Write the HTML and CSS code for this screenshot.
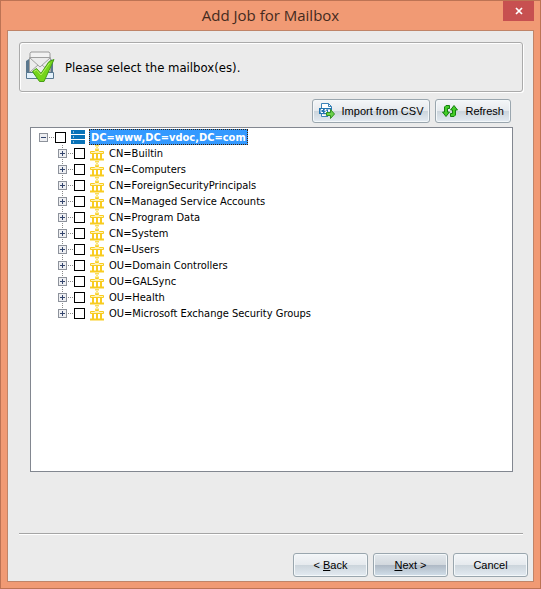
FILE: index.html
```html
<!DOCTYPE html>
<html lang="en">
<head>
    <meta charset="UTF-8">
    <meta name="viewport" content="width=device-width, initial-scale=1.0">
    <title>Add Job for Mailbox</title>
    <link rel="stylesheet" href="styles.css">
</head>
<body>
    <!-- Shared icons -->
    <svg class="icon-defs" aria-hidden="true">
        <symbol id="icon-container" viewBox="0 0 14 16">
            <path d="M5 .5h4M5.500 1l3 3M8.500 1l-3 3M5 4.500h4" stroke="#fadc50" fill="none"/>
            <path d="M.5 8.500V6.500h4l1-1h3l1 1h4v2z" stroke="#f8cc20" fill="#fff3b8"/>
            <path d="M3 9v5M7 9v5M11 9v5" stroke="#f8cc20" stroke-width="2"/>
            <path d="M0 14.500h14" stroke="#f8cc20" stroke-width="2"/>
        </symbol>
    </svg>

    <div class="window">
        <header class="title-bar">
            <h1 class="title">Add Job for Mailbox</h1>
            <button class="close-btn" type="button" aria-label="Close">
                <svg width="8" height="8" viewBox="0 0 8 8"><path d="M1 1l6 6M7 1L1 7" stroke="#fff" stroke-width="1.700"/></svg>
            </button>
        </header>

        <main class="content">
            <div class="banner">
                <svg class="banner-icon" width="30" height="32" viewBox="0 0 30 32" aria-hidden="true">
                    <path d="M1 10l3-2h22l2 2v17H1z" fill="#5b788e"/>
                    <path d="M5 2.500L6 1h18l1 1.500V20H5z" fill="#f2f2f2" stroke="#999"/>
                    <path d="M4.500 6.500h21V22h-21z" fill="#ececec" stroke="#a0a0a0"/>
                    <path d="M5 7l10 9L25 7M5 21l8-7M25 21l-8-7" fill="none" stroke="#a0a0a0"/>
                    <path d="M1.500 21.500h7l2 3h9l2-3h7v6h-27z" fill="#e3f1fc" stroke="#587890"/>
                    <path d="M7.500 20.500l4-3 4.500 5L24 10.500l5-2L19 30.500h-4.500z" fill="#74d41c" stroke="#469e16"/>
                    <path d="M9 20.500l2.500-1.500 4.500 5 8.500-12" fill="none" stroke="#b4f060"/>
                </svg>
                <p class="banner-text">Please select the mailbox(es).</p>
            </div>

            <div class="toolbar">
                <button class="btn tool-btn" type="button">
                    <svg width="16" height="16" viewBox="0 0 16 16" aria-hidden="true">
                        <path d="M2.500 5V.500h7l3 3V6M2.500 11v2.500H9" fill="#fff" stroke="#3b83b8"/>
                        <path d="M9.500.500v3h3" fill="none" stroke="#3b83b8"/>
                        <path d="M0 5h13v6H0z" fill="#2475b0"/>
                        <path d="M4 6.500H2v3h2M7.500 6.500H6V8h1.500v1.500H5.500M9 6l1 3 1-3" fill="none" stroke="#fff"/>
                        <path d="M7.500 9.500h4v-3l4 4.500-4 4.500v-3h-4z" fill="#6bd14b" stroke="#309020"/>
                    </svg>
                    <span>Import from CSV</span>
                </button>
                <button class="btn tool-btn" type="button">
                    <svg width="16" height="14" viewBox="0 0 16 14" aria-hidden="true">
                        <path d="M7.500 1.500H4L2.500 3v5h-2L4 12.500 7.500 8h-2V4.500h2z" fill="#43cc28" stroke="#168010"/>
                        <path d="M8.500 12.500H12l1.500-1.500V6h2L12 1.500 8.500 6h2v3.500h-2z" fill="#43cc28" stroke="#168010"/>
                    </svg>
                    <span>Refresh</span>
                </button>
            </div>

            <div class="tree-box">
                <div class="tree-row">
                    <button class="expander open" type="button" aria-label="Collapse"></button>
                    <span class="branch"></span>
                    <input class="check" type="checkbox" id="root">
                    <svg class="node-icon" width="14" height="16" viewBox="0 0 14 16" aria-hidden="true">
                        <path d="M0 1h14v4H0zM0 6h14v4H0zM0 11h14v4H0z" fill="#0872b8"/>
                        <path d="M2 3h1M2 8h1M2 13h1" stroke="#fff"/>
                    </svg>
                    <label class="node-label selected" for="root">DC=www,DC=vdoc,DC=com</label>
                </div>
                <ul class="tree-children">
                    <li class="tree-row">
                        <button class="expander" type="button" aria-label="Expand"></button>
                        <span class="branch"></span>
                        <input class="check" type="checkbox" id="builtin">
                        <svg class="node-icon" width="14" height="16" aria-hidden="true"><use href="#icon-container"/></svg>
                        <label class="node-label" for="builtin">CN=Builtin</label>
                    </li>
                    <li class="tree-row">
                        <button class="expander" type="button" aria-label="Expand"></button>
                        <span class="branch"></span>
                        <input class="check" type="checkbox" id="computers">
                        <svg class="node-icon" width="14" height="16" aria-hidden="true"><use href="#icon-container"/></svg>
                        <label class="node-label" for="computers">CN=Computers</label>
                    </li>
                    <li class="tree-row">
                        <button class="expander" type="button" aria-label="Expand"></button>
                        <span class="branch"></span>
                        <input class="check" type="checkbox" id="principals">
                        <svg class="node-icon" width="14" height="16" aria-hidden="true"><use href="#icon-container"/></svg>
                        <label class="node-label" for="principals">CN=ForeignSecurityPrincipals</label>
                    </li>
                    <li class="tree-row">
                        <button class="expander" type="button" aria-label="Expand"></button>
                        <span class="branch"></span>
                        <input class="check" type="checkbox" id="accounts">
                        <svg class="node-icon" width="14" height="16" aria-hidden="true"><use href="#icon-container"/></svg>
                        <label class="node-label" for="accounts">CN=Managed Service Accounts</label>
                    </li>
                    <li class="tree-row">
                        <button class="expander" type="button" aria-label="Expand"></button>
                        <span class="branch"></span>
                        <input class="check" type="checkbox" id="program-data">
                        <svg class="node-icon" width="14" height="16" aria-hidden="true"><use href="#icon-container"/></svg>
                        <label class="node-label" for="program-data">CN=Program Data</label>
                    </li>
                    <li class="tree-row">
                        <button class="expander" type="button" aria-label="Expand"></button>
                        <span class="branch"></span>
                        <input class="check" type="checkbox" id="system">
                        <svg class="node-icon" width="14" height="16" aria-hidden="true"><use href="#icon-container"/></svg>
                        <label class="node-label" for="system">CN=System</label>
                    </li>
                    <li class="tree-row">
                        <button class="expander" type="button" aria-label="Expand"></button>
                        <span class="branch"></span>
                        <input class="check" type="checkbox" id="users">
                        <svg class="node-icon" width="14" height="16" aria-hidden="true"><use href="#icon-container"/></svg>
                        <label class="node-label" for="users">CN=Users</label>
                    </li>
                    <li class="tree-row">
                        <button class="expander" type="button" aria-label="Expand"></button>
                        <span class="branch"></span>
                        <input class="check" type="checkbox" id="controllers">
                        <svg class="node-icon" width="14" height="16" aria-hidden="true"><use href="#icon-container"/></svg>
                        <label class="node-label" for="controllers">OU=Domain Controllers</label>
                    </li>
                    <li class="tree-row">
                        <button class="expander" type="button" aria-label="Expand"></button>
                        <span class="branch"></span>
                        <input class="check" type="checkbox" id="galsync">
                        <svg class="node-icon" width="14" height="16" aria-hidden="true"><use href="#icon-container"/></svg>
                        <label class="node-label" for="galsync">OU=GALSync</label>
                    </li>
                    <li class="tree-row">
                        <button class="expander" type="button" aria-label="Expand"></button>
                        <span class="branch"></span>
                        <input class="check" type="checkbox" id="health">
                        <svg class="node-icon" width="14" height="16" aria-hidden="true"><use href="#icon-container"/></svg>
                        <label class="node-label" for="health">OU=Health</label>
                    </li>
                    <li class="tree-row">
                        <button class="expander" type="button" aria-label="Expand"></button>
                        <span class="branch"></span>
                        <input class="check" type="checkbox" id="exchange-groups">
                        <svg class="node-icon" width="14" height="16" aria-hidden="true"><use href="#icon-container"/></svg>
                        <label class="node-label" for="exchange-groups">OU=Microsoft Exchange Security Groups</label>
                    </li>
                </ul>
            </div>

            <hr class="divider">
            <footer class="wizard-footer">
                <button class="btn wizard-btn" type="button">&lt; <u>B</u>ack</button>
                <button class="btn wizard-btn default" type="button"><u>N</u>ext &gt;</button>
                <button class="btn wizard-btn" type="button">Cancel</button>
            </footer>
        </main>
    </div>
</body>
</html>
```
FILE: styles.css
```css
* {
    box-sizing: border-box;
}
body {
    margin: 0;
    font-family: "DejaVu Sans Condensed", "Noto Sans", sans-serif;
    color: #000;
}
.icon-defs {
    display: none;
}
.window {
    display: flex;
    flex-direction: column;
    min-height: 100vh;
    padding: 0 6px 6px;
    border: 1px solid #bd7354;
    background-color: #f19a74;
}
.title-bar {
    display: grid;
    grid-template-columns: 31px 1fr 31px;
    align-items: start;
    height: 29px;
}
.title {
    grid-column: 2;
    margin: 0;
    font-family: "Open Sans", sans-serif;
    font-size: 15px;
    font-weight: normal;
    line-height: 29px;
    text-align: center;
    color: #442a20;
}
.close-btn {
    display: flex;
    align-items: center;
    justify-content: center;
    height: 20px;
    padding: 0;
    border: none;
    background-color: #c75050;
}
.content {
    flex: 1;
    display: flex;
    flex-direction: column;
    border: 1px solid #c08468;
    background-color: #ebebeb;
    padding: 11px 5px 4px 11px;
}
.banner {
    display: flex;
    align-items: center;
    gap: 10px;
    height: 50px;
    margin-right: 5px;
    padding: 0 5px;
    border: 1px solid #aaa;
    border-radius: 3px;
    box-shadow: inset 1px 1px #fff, 1px 1px #fff;
}
.banner-text {
    margin: 0;
    font-size: 13px;
}
.toolbar {
    display: flex;
    justify-content: flex-end;
    gap: 5px;
    margin: 7px 17px 4px 0;
}
.btn {
    height: 24px;
    padding: 0 6px;
    border: 1px solid #9aa6ae;
    border-radius: 3px;
    background: linear-gradient(#f4f6f8, #e6eaee 48%, #ccd5dc 52%, #e4ebf2);
    box-shadow: inset 0 0 0 1px #f4f8fa;
    font-family: "Liberation Sans", Arial, sans-serif;
    font-size: 11px;
    color: #000;
}
.tool-btn {
    display: flex;
    align-items: center;
    gap: 7px;
    min-width: 75px;
}
.tree-box {
    flex: 1;
    margin: 0 15px 0 11px;
    padding: 1px 8px;
    border: 1px solid #828790;
    background-color: #fff;
}
.tree-row {
    display: flex;
    align-items: center;
    height: 16px;
}
.tree-children {
    margin: 0;
    padding: 0 0 0 19px;
    list-style: none;
    /* vertical line joining the expanders */
    background: repeating-linear-gradient(#888 0 1px, #fff 1px 2px) 23px 0 / 1px calc(100% - 8px) no-repeat;
}
.expander {
    flex: none;
    width: 9px;
    height: 9px;
    padding: 0;
    border: 1px solid #8d929b;
    background:
        linear-gradient(#34466e, #34466e) center / 5px 1px no-repeat,
        linear-gradient(#34466e, #34466e) center / 1px 5px no-repeat,
        #eeeff2;
}
.expander.open {
    background: linear-gradient(#34466e, #34466e) center / 5px 1px no-repeat, #eeeff2;
}
.branch {
    width: 7px;
    height: 1px;
    background: repeating-linear-gradient(90deg, #fff 0 1px, #888 1px 2px);
}
.check {
    appearance: none;
    flex: none;
    width: 11px;
    height: 11px;
    margin: 0 5px 0 0;
    border: 1px solid #000;
    background-color: #fff;
}
.check:checked {
    background-color: #000;
}
.node-icon {
    flex: none;
    margin-right: 4px;
}
.node-label {
    padding: 1px 1px 0;
    font-size: 11px;
    line-height: 15px;
    white-space: nowrap;
}
.node-label.selected {
    padding: 1px 2px 0;
    background-color: #3399ff;
    color: #fff;
    font-weight: bold;
    outline: 1px dotted #402000;
    outline-offset: -1px;
}
.divider {
    width: calc(100% - 5px);
    height: 2px;
    margin: 61px 0 18px;
    border: none;
    border-top: 1px solid #a5a5a5;
    background-color: #fff;
}
.wizard-footer {
    display: flex;
    justify-content: flex-end;
    gap: 5px;
}
.wizard-btn {
    width: 75px;
}
.wizard-btn.default {
    background: linear-gradient(#e4e9ed, #d2d8de 48%, #afbac6 52%, #d3e0eb);
}
```
